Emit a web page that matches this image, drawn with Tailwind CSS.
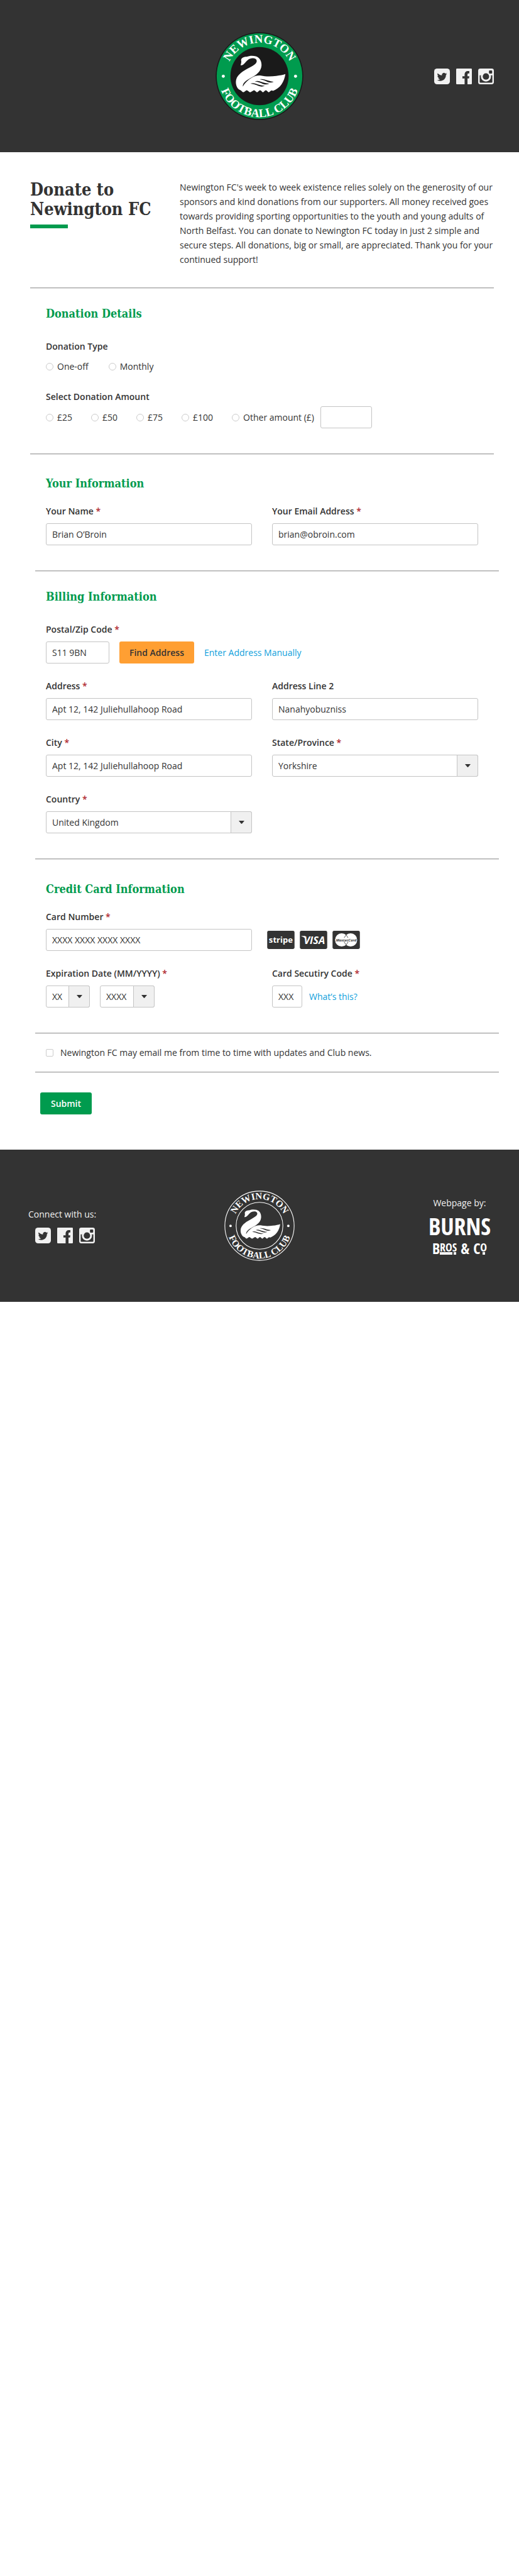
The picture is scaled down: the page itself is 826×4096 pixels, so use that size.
<!DOCTYPE html>
<html lang="en">
<head>
<meta charset="utf-8">
<meta name="viewport" content="width=device-width, initial-scale=1">
<title>Donate to Newington FC</title>
<script src="https://cdn.jsdelivr.net/npm/@tailwindcss/browser@4"></script>
</head>
<body class="bg-white font-['Open_Sans',sans-serif] text-sm leading-5 text-[#333333]">

<!-- Shared artwork -->
<svg width="0" height="0" class="absolute" aria-hidden="true">
  <defs>
    <path id="arc-top" d="M109 301A197 197 0 0 1 503 301"/>
    <path id="arc-bottom" d="M64 301A242 242 0 0 0 548 301"/>
    <symbol id="swan" viewBox="46 41 520 520">
      <path fill="currentColor" fill-rule="evenodd" d="M194 237C198 225 200 216 197 207C199 192 214 187 230 187C245 180 268 179 284 184C306 190 319 211 318 238C316 268 296 288 270 303C240 320 206 335 207 363C220 340 240 321 262 309C280 299 297 295 315 298C340 304 375 304 405 300C428 297 445 294 459 289C456 310 449 332 436 350C423 368 404 381 386 388Q378 383 372 388L364 395Q360 398 356 394L348 386Q343 382 338 387L330 395Q326 398 322 394L314 386Q309 382 304 387L295 395Q291 398 287 394L278 386Q273 382 268 387L255 395Q250 398 245 394L235 386Q230 382 225 387L216 394Q210 398 205 394L197 386Q190 383 186 381C170 370 163 343 168 322C176 291 212 269 245 252C275 236 296 222 288 205C283 194 264 193 248 199C232 206 222 224 212 231C206 236 199 238 194 237ZM307 320C316 317 326 318 336 321C353 326 371 332 390 334C378 340 366 340 353 335C338 328 324 323 307 320ZM278 333C288 329 298 329 309 333C328 339 345 345 364 346C352 352 339 352 326 347C311 340 296 335 278 333ZM252 346C262 341 272 342 283 346C301 352 318 358 338 359C325 364 312 364 299 359C285 353 270 348 252 346Z"/>
      <circle cx="92" cy="302" r="9" fill="currentColor"/>
      <circle cx="519" cy="302" r="9" fill="currentColor"/>
    </symbol>
    <symbol id="twitter" viewBox="0 0 93 93">
      <rect width="93" height="93" rx="17" fill="currentColor"/>
      <path fill="#333333" transform="translate(17 20) scale(2.45)" d="M23.953 4.57a10 10 0 01-2.825.775 4.958 4.958 0 002.163-2.723c-.951.555-2.005.959-3.127 1.184a4.92 4.92 0 00-8.384 4.482C7.69 8.095 4.067 6.13 1.64 3.162a4.822 4.822 0 00-.666 2.475c0 1.71.87 3.213 2.188 4.096a4.904 4.904 0 01-2.228-.616v.06a4.923 4.923 0 003.946 4.827 4.996 4.996 0 01-2.212.085 4.936 4.936 0 004.604 3.417 9.867 9.867 0 01-6.102 2.105c-.39 0-.779-.023-1.17-.067a13.995 13.995 0 007.557 2.209c9.053 0 13.998-7.496 13.998-13.985 0-.21 0-.42-.015-.63A9.935 9.935 0 0024 4.59z"/>
    </symbol>
    <symbol id="facebook" viewBox="0 0 93 93">
      <rect width="93" height="93" rx="5" fill="currentColor"/>
      <path fill="#333333" d="M50 93V59H37V46H50V36C50 22 58 15 70 15H78V29H73C69 29 67 31 67 36V46H78L76 59H67V93Z"/>
    </symbol>
    <symbol id="instagram" viewBox="0 0 93 93">
      <rect width="93" height="93" rx="13" fill="currentColor"/>
      <path fill="#333333" d="M9 40H84V79Q84 84 79 84H14Q9 84 9 79Z"/>
      <circle cx="46" cy="47" r="30" fill="currentColor"/>
      <circle cx="46" cy="47" r="19" fill="#333333"/>
      <rect x="64" y="11" width="19" height="19" rx="4" fill="#333333"/>
    </symbol>
  </defs>
</svg>

<header class="grid h-[242px] grid-cols-[1fr_auto_1fr] items-center bg-[#333333] pr-10 pl-10">
  <a href="#" class="col-start-2" aria-label="Newington Football Club home">
    <svg class="size-[140px] text-white" viewBox="46 41 520 520">
      <circle cx="306" cy="301" r="259" fill="#1a1a1a"/>
      <circle cx="306" cy="301" r="253" fill="#009b4e"/>
      <circle cx="306" cy="301" r="172" fill="#1a1a1a"/>
      <g fill="currentColor" font-family="Liberation Serif, serif" font-weight="700" font-size="69" text-anchor="middle">
        <text><textPath href="#arc-top" startOffset="50%">NEWINGTON</textPath></text>
        <text><textPath href="#arc-bottom" startOffset="50%">FOOTBALL CLUB</textPath></text>
      </g>
      <use href="#swan" x="46" y="41" width="520" height="520"/>
    </svg>
  </a>
  <nav class="flex gap-[10px] justify-self-end text-[#f1f1f1]" aria-label="Social">
    <a href="#" aria-label="Twitter"><svg class="size-[25px]"><use href="#twitter"/></svg></a>
    <a href="#" aria-label="Facebook"><svg class="size-[25px]"><use href="#facebook"/></svg></a>
    <a href="#" aria-label="Instagram"><svg class="size-[25px]"><use href="#instagram"/></svg></a>
  </nav>
</header>

<main class="pt-11 pr-10 pb-14 pl-12">
  <div class="grid grid-cols-[206px_1fr] gap-8">
    <div>
      <h1 class="font-['DejaVu_Serif_Condensed','DejaVu_Serif',serif] text-[27px] leading-[31px] font-bold">Donate to<br>Newington FC</h1>
      <div class="mt-[9px] h-[6px] w-[60px] bg-[#009b4e]"></div>
    </div>
    <p class="leading-[23px]">Newington FC's week to week existence relies solely on the generosity of our sponsors and kind donations from our supporters. All money received goes towards providing sporting opportunities to the youth and young adults of North Belfast. You can donate to Newington FC today in just 2 simple and secure steps. All donations, big or small, are appreciated. Thank you for your continued support!</p>
  </div>

  <form>
    <hr class="mt-[33px] h-[2px] border-t border-b border-t-[#a6a6a6] border-b-[#dedede]">

    <section class="mx-[25px] pt-[26px] pb-10">
      <h2 class="font-['DejaVu_Serif_Condensed','DejaVu_Serif',serif] text-lg font-bold text-[#009b4e]">Donation Details</h2>
      <fieldset class="mt-7">
        <legend class="font-semibold">Donation Type</legend>
        <div class="mt-3 flex gap-8">
          <label class="flex items-center gap-[6px]"><input type="radio" name="type" class="size-3 appearance-none rounded-full border border-[#cccccc] checked:bg-[#009b4e]">One-off</label>
          <label class="flex items-center gap-[6px]"><input type="radio" name="type" class="size-3 appearance-none rounded-full border border-[#cccccc] checked:bg-[#009b4e]">Monthly</label>
        </div>
      </fieldset>
      <fieldset class="mt-7">
        <legend class="font-semibold">Select Donation Amount</legend>
        <div class="mt-[5px] flex items-center gap-[30px]">
          <label class="flex items-center gap-[6px]"><input type="radio" name="amount" class="size-3 appearance-none rounded-full border border-[#cccccc] checked:bg-[#009b4e]">£25</label>
          <label class="flex items-center gap-[6px]"><input type="radio" name="amount" class="size-3 appearance-none rounded-full border border-[#cccccc] checked:bg-[#009b4e]">£50</label>
          <label class="flex items-center gap-[6px]"><input type="radio" name="amount" class="size-3 appearance-none rounded-full border border-[#cccccc] checked:bg-[#009b4e]">£75</label>
          <label class="flex items-center gap-[6px]"><input type="radio" name="amount" class="size-3 appearance-none rounded-full border border-[#cccccc] checked:bg-[#009b4e]">£100</label>
          <div class="flex items-center gap-[10px]">
            <label class="flex items-center gap-[6px]"><input type="radio" name="amount" class="size-3 appearance-none rounded-full border border-[#cccccc] checked:bg-[#009b4e]">Other amount (£)</label>
            <input type="text" aria-label="Other amount in pounds" class="h-[35px] w-[82px] rounded-[3px] border border-[#c4c4c4] px-[9px]">
          </div>
        </div>
      </fieldset>
    </section>

    <hr class="h-[2px] border-t border-b border-t-[#a6a6a6] border-b-[#dedede]">

    <section class="mx-[25px] pt-8 pb-10">
      <h2 class="font-['DejaVu_Serif_Condensed','DejaVu_Serif',serif] text-lg font-bold text-[#009b4e]">Your Information</h2>
      <div class="mt-5 grid grid-cols-2 gap-x-8">
        <div class="flex flex-col gap-[9px]">
          <label for="name" class="font-semibold">Your Name <span class="text-[#b0272d]">*</span></label>
          <input id="name" type="text" value="Brian O’Broin" class="h-[35px] rounded-[3px] border border-[#c4c4c4] px-[9px]">
        </div>
        <div class="flex flex-col gap-[9px]">
          <label for="email" class="font-semibold">Your Email Address <span class="text-[#b0272d]">*</span></label>
          <input id="email" type="email" value="brian@obroin.com" class="h-[35px] rounded-[3px] border border-[#c4c4c4] px-[9px]">
        </div>
      </div>
    </section>

    <hr class="-mr-2 ml-2 h-[2px] border-t border-b border-t-[#a6a6a6] border-b-[#dedede]">

    <section class="mx-[25px] pt-[26px] pb-10">
      <h2 class="font-['DejaVu_Serif_Condensed','DejaVu_Serif',serif] text-lg font-bold text-[#009b4e]">Billing Information</h2>
      <div class="mt-7 grid grid-cols-2 gap-x-8 gap-y-[26px]">
        <div class="col-span-2 flex flex-col gap-[9px]">
          <label for="zip" class="font-semibold">Postal/Zip Code <span class="text-[#b0272d]">*</span></label>
          <div class="flex items-center gap-4">
            <input id="zip" type="text" value="S11 9BN" class="h-[35px] w-[101px] rounded-[3px] border border-[#c4c4c4] px-[9px]">
            <button type="button" class="h-[35px] w-[119px] rounded-[3px] bg-[#ff9f33] font-semibold">Find Address</button>
            <a href="#" class="text-[#0f9fdc]">Enter Address Manually</a>
          </div>
        </div>
        <div class="flex flex-col gap-[9px]">
          <label for="address1" class="font-semibold">Address <span class="text-[#b0272d]">*</span></label>
          <input id="address1" type="text" value="Apt 12, 142 Juliehullahoop Road" class="h-[35px] rounded-[3px] border border-[#c4c4c4] px-[9px]">
        </div>
        <div class="flex flex-col gap-[9px]">
          <label for="address2" class="font-semibold">Address Line 2</label>
          <input id="address2" type="text" value="Nanahyobuzniss" class="h-[35px] rounded-[3px] border border-[#c4c4c4] px-[9px]">
        </div>
        <div class="flex flex-col gap-[9px]">
          <label for="city" class="font-semibold">City <span class="text-[#b0272d]">*</span></label>
          <input id="city" type="text" value="Apt 12, 142 Juliehullahoop Road" class="h-[35px] rounded-[3px] border border-[#c4c4c4] px-[9px]">
        </div>
        <div class="flex flex-col gap-[9px]">
          <label for="state" class="font-semibold">State/Province <span class="text-[#b0272d]">*</span></label>
          <div class="relative flex">
            <select id="state" class="h-[35px] w-full appearance-none rounded-[3px] border border-[#c4c4c4] bg-white pl-[9px]"><option>Yorkshire</option></select>
            <span class="pointer-events-none absolute inset-y-0 right-0 flex w-[34px] items-center justify-center rounded-r-[3px] border border-[#c4c4c4] bg-[#f0f0f0]"><svg class="h-[5px] w-[9px]" viewBox="0 0 9 5"><path fill="#333333" d="M0 0H9L5.3 4.6Q4.500 5.300 3.700 4.600Z"/></svg></span>
          </div>
        </div>
        <div class="flex flex-col gap-[9px]">
          <label for="country" class="font-semibold">Country <span class="text-[#b0272d]">*</span></label>
          <div class="relative flex">
            <select id="country" class="h-[35px] w-full appearance-none rounded-[3px] border border-[#c4c4c4] bg-white pl-[9px]"><option>United Kingdom</option></select>
            <span class="pointer-events-none absolute inset-y-0 right-0 flex w-[34px] items-center justify-center rounded-r-[3px] border border-[#c4c4c4] bg-[#f0f0f0]"><svg class="h-[5px] w-[9px]" viewBox="0 0 9 5"><path fill="#333333" d="M0 0H9L5.3 4.6Q4.500 5.300 3.700 4.600Z"/></svg></span>
          </div>
        </div>
      </div>
    </section>

    <hr class="-mr-2 ml-2 h-[2px] border-t border-b border-t-[#a6a6a6] border-b-[#dedede]">

    <section class="mx-[25px] pt-[33px] pb-10">
      <h2 class="font-['DejaVu_Serif_Condensed','DejaVu_Serif',serif] text-lg font-bold text-[#009b4e]">Credit Card Information</h2>
      <div class="mt-5 grid grid-cols-2 items-end gap-x-8 gap-y-[26px]">
        <div class="flex flex-col gap-[9px]">
          <label for="card" class="font-semibold">Card Number <span class="text-[#b0272d]">*</span></label>
          <input id="card" type="text" value="XXXX XXXX XXXX XXXX" class="h-[35px] rounded-[3px] border border-[#c4c4c4] px-[9px]">
        </div>
        <div class="-ml-2 flex h-[35px] items-center gap-2">
          <svg class="h-[29px] w-[44px]" viewBox="0 0 162 108"><rect width="162" height="108" rx="9" fill="#333333"/><text x="81" y="71" text-anchor="middle" font-family="Open Sans, sans-serif" font-weight="700" font-size="49" fill="#ffffff">stripe</text></svg>
          <svg class="h-[29px] w-[44px]" viewBox="0 0 162 108"><rect width="162" height="108" rx="9" fill="#333333"/><text x="86" y="78" text-anchor="middle" font-family="Open Sans, sans-serif" font-weight="700" font-style="italic" font-size="61" fill="#ffffff">VISA</text><path fill="#ffffff" d="M9 31H32L40 60C34 46 24 37 9 33Z"/></svg>
          <svg class="h-[29px] w-[44px]" viewBox="0 0 162 108"><rect width="162" height="108" rx="9" fill="#333333"/><circle cx="54" cy="54" r="39" fill="#ffffff"/><circle cx="107" cy="54" r="39" fill="#ffffff"/><path fill="none" stroke="#333333" stroke-width="3" d="M80.500 25A39 39 0 0 1 80.500 83A39 39 0 0 1 80.500 25Z"/><rect x="64" y="42" width="34" height="22" fill="#ffffff"/><text x="81" y="62" text-anchor="middle" font-family="Open Sans, sans-serif" font-weight="700" font-style="italic" font-size="22" fill="#333333">MasterCard</text></svg>
        </div>
        <fieldset>
          <legend class="font-semibold">Expiration Date (MM/YYYY) <span class="text-[#b0272d]">*</span></legend>
          <div class="mt-[9px] flex gap-4">
            <div class="relative flex w-[70px]">
              <select aria-label="Expiration month" class="h-[35px] w-full appearance-none rounded-[3px] border border-[#c4c4c4] bg-white pl-[9px]"><option>XX</option></select>
              <span class="pointer-events-none absolute inset-y-0 right-0 flex w-[34px] items-center justify-center rounded-r-[3px] border border-[#c4c4c4] bg-[#f0f0f0]"><svg class="h-[5px] w-[9px]" viewBox="0 0 9 5"><path fill="#333333" d="M0 0H9L5.3 4.6Q4.500 5.300 3.700 4.600Z"/></svg></span>
            </div>
            <div class="relative flex w-[87px]">
              <select aria-label="Expiration year" class="h-[35px] w-full appearance-none rounded-[3px] border border-[#c4c4c4] bg-white pl-[9px]"><option>XXXX</option></select>
              <span class="pointer-events-none absolute inset-y-0 right-0 flex w-[34px] items-center justify-center rounded-r-[3px] border border-[#c4c4c4] bg-[#f0f0f0]"><svg class="h-[5px] w-[9px]" viewBox="0 0 9 5"><path fill="#333333" d="M0 0H9L5.3 4.6Q4.500 5.300 3.700 4.600Z"/></svg></span>
            </div>
          </div>
        </fieldset>
        <div class="flex flex-col gap-[9px]">
          <label for="cvc" class="font-semibold">Card Secutiry Code <span class="text-[#b0272d]">*</span></label>
          <div class="flex items-center gap-[11px]">
            <input id="cvc" type="text" value="XXX" class="h-[35px] w-12 rounded-[3px] border border-[#c4c4c4] px-[9px]">
            <a href="#" class="text-[#0f9fdc]">What’s this?</a>
          </div>
        </div>
      </div>
    </section>

    <hr class="-mr-2 ml-2 h-[2px] border-t border-b border-t-[#a6a6a6] border-b-[#dedede]">

    <div class="mx-[25px] py-5">
      <label class="flex items-center gap-[11px]"><input type="checkbox" class="size-3 appearance-none rounded-[2px] border border-[#cccccc] checked:bg-[#009b4e]">Newington FC may email me from time to time with updates and Club news.</label>
    </div>

    <hr class="-mr-2 ml-2 h-[2px] border-t border-b border-t-[#a6a6a6] border-b-[#dedede]">

    <button type="submit" class="mt-[31px] ml-4 h-[35px] w-[82px] rounded-[3px] bg-[#009b4e] font-semibold text-white">Submit</button>
  </form>
</main>

<footer class="grid h-[242px] grid-cols-[1fr_auto_1fr] items-center bg-[#333333] px-[45px] text-[#f1f1f1]">
  <div class="flex flex-col gap-[11px] justify-self-start">
    <p>Connect with us:</p>
    <nav class="flex gap-[10px] pl-[11px]" aria-label="Social links">
      <a href="#" aria-label="Twitter"><svg class="size-[25px]"><use href="#twitter"/></svg></a>
      <a href="#" aria-label="Facebook"><svg class="size-[25px]"><use href="#facebook"/></svg></a>
      <a href="#" aria-label="Instagram"><svg class="size-[25px]"><use href="#instagram"/></svg></a>
    </nav>
  </div>
  <svg class="size-28 text-white" viewBox="46 41 520 520" role="img" aria-label="Newington Football Club">
    <circle cx="306" cy="301" r="256" fill="none" stroke="currentColor" stroke-width="5"/>
    <circle cx="306" cy="301" r="173" fill="none" stroke="currentColor" stroke-width="5"/>
    <g fill="currentColor" font-family="Liberation Serif, serif" font-weight="700" font-size="69" text-anchor="middle">
      <text><textPath href="#arc-top" startOffset="50%">NEWINGTON</textPath></text>
      <text><textPath href="#arc-bottom" startOffset="50%">FOOTBALL CLUB</textPath></text>
    </g>
    <use href="#swan" x="46" y="41" width="520" height="520"/>
  </svg>
  <div class="flex flex-col items-center justify-self-end">
    <p>Webpage by:</p>
    <a href="#" class="flex flex-col items-center font-['Open_Sans_Condensed','Roboto_Condensed',sans-serif] font-bold text-white">
      <span class="text-[38px] leading-[52px]">BURNS</span>
      <span class="flex h-5 items-start text-[24px] leading-5">
        <span>B</span>
        <span class="flex flex-col text-lg leading-4">RO<span class="h-1 bg-white"></span></span>
        <span class="flex flex-col items-center text-lg leading-4">S<span class="size-1 bg-white"></span></span>
        <span class="px-[6px]">&amp;</span>
        <span>C</span>
        <span class="flex flex-col items-center text-lg leading-4">O<span class="size-1 bg-white"></span></span>
      </span>
    </a>
  </div>
</footer>

</body>
</html>
